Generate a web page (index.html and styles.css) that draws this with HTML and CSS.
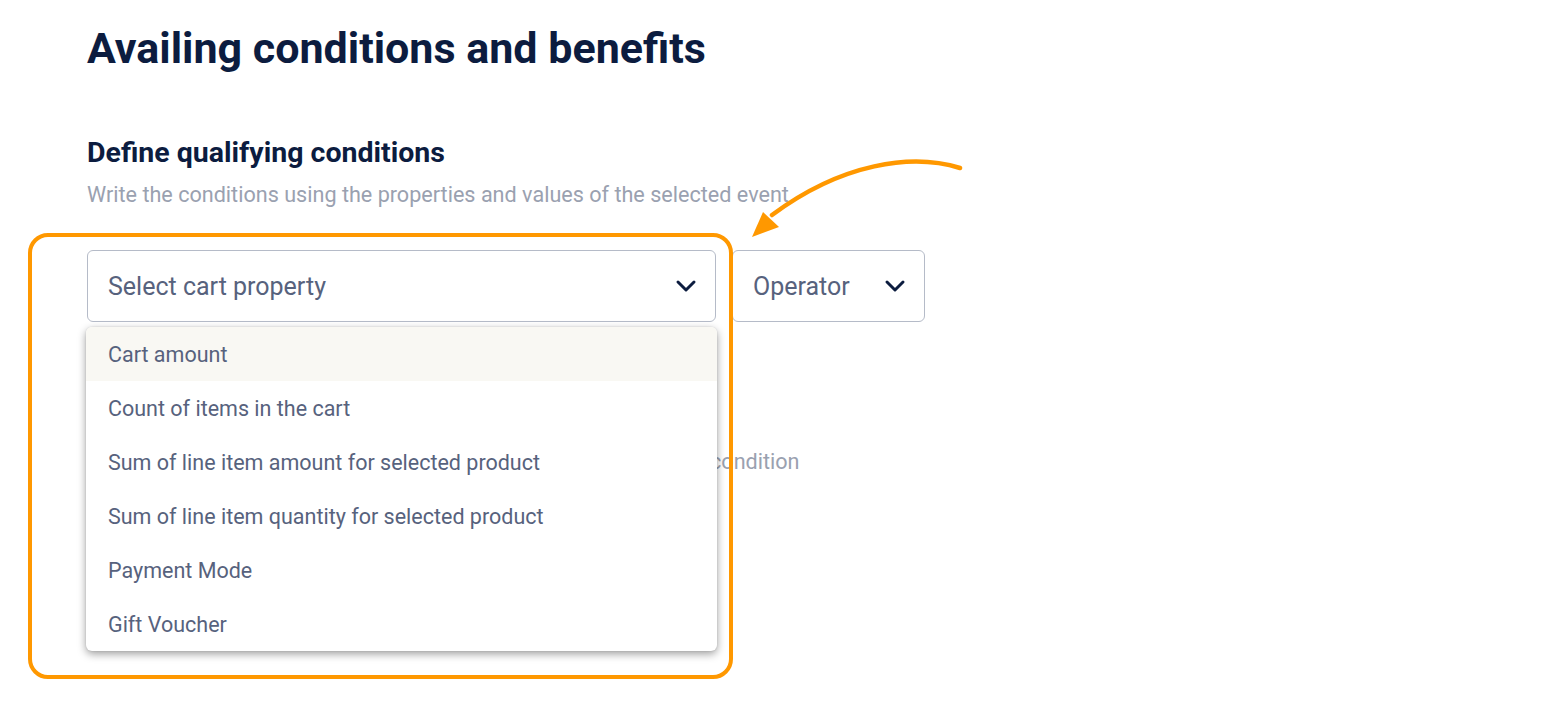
FILE: index.html
```html
<!DOCTYPE html>
<html>
<head>
<meta charset="utf-8">
<link rel="stylesheet" href="styles.css">
</head>
<body>
<div class="page">
  <h1 class="title">Availing conditions and benefits</h1>
  <section class="section">
    <h2 class="subtitle">Define qualifying conditions</h2>
    <p class="desc">Write the conditions using the properties and values of the selected event</p>
    <div class="row">
      <div class="select-wrap">
        <div class="select select-prop">
          <span class="placeholder">Select cart property</span>
          <svg class="chev" width="22" height="14" viewBox="0 0 22 14"><path d="M3 3 L11 11 L19 3" fill="none" stroke="#0c1c3f" stroke-width="3" stroke-linecap="round" stroke-linejoin="round"/></svg>
        </div>
        <ul class="menu">
          <li class="item active">Cart amount</li>
          <li class="item">Count of items in the cart</li>
          <li class="item">Sum of line item amount for selected product</li>
          <li class="item">Sum of line item quantity for selected product</li>
          <li class="item">Payment Mode</li>
          <li class="item">Gift Voucher</li>
        </ul>
        <div class="highlight"></div>
      </div>
      <div class="select select-op">
        <span class="placeholder">Operator</span>
        <svg class="chev" width="22" height="14" viewBox="0 0 22 14"><path d="M3 3 L11 11 L19 3" fill="none" stroke="#0c1c3f" stroke-width="3" stroke-linecap="round" stroke-linejoin="round"/></svg>
      </div>
    </div>
  </section>
  <section class="section2">
    <p class="desc">Add benefits the customer gets when a cart meets the qualifying condition</p>
  </section>
  <svg class="arrow" width="240" height="100" viewBox="0 0 240 100">
    <path d="M228 13 C180 -2 110 8 40 60" fill="none" stroke="#ff9800" stroke-width="4.5" stroke-linecap="round"/>
    <path d="M20 82 L31 57 L47 72 Z" fill="#ff9800"/>
  </svg>
</div>
</body>
</html>
```
FILE: styles.css
```css
* { box-sizing: border-box; }
html, body { margin: 0; padding: 0; background: #ffffff; }
body { font-family: Roboto, "Noto Sans", Arial, sans-serif; }
.page {
  position: relative;
  width: 1546px;
  height: 712px;
  padding: 22px 0 0 87px;
  overflow: hidden;
}
.title {
  margin: 0;
  font-size: 43px;
  line-height: 52px;
  font-weight: 700;
  color: #0c1c3f;
}
.section { margin-top: 62px; }
.subtitle {
  margin: 0;
  font-size: 28.5px;
  line-height: 34px;
  font-weight: 700;
  color: #0c1c3f;
}
.desc {
  margin: 11px 0 0;
  font-size: 21.6px;
  line-height: 28px;
  color: #9aa1b0;
}
.row {
  display: flex;
  gap: 16px;
  margin-top: 41px;
}
.select-wrap { position: relative; }
.select {
  height: 72px;
  border: 1px solid #b5bbc8;
  border-radius: 6px;
  display: flex;
  align-items: center;
  justify-content: space-between;
  padding: 0 18px 0 20px;
  background: #fff;
}
.select-prop { width: 629px; }
.select-op { width: 193px; }
.placeholder {
  font-size: 25px;
  color: #57627d;
}
.chev { display: block; }
.menu {
  position: absolute;
  top: 77px;
  left: -1px;
  width: 631px;
  margin: 0;
  padding: 0;
  list-style: none;
  background: #fff;
  border-radius: 6px;
  box-shadow: 0 3px 8px rgba(0,0,0,0.38), 0 0 2px rgba(0,0,0,0.12);
  overflow: hidden;
  z-index: 2;
}
.item {
  height: 54px;
  display: flex;
  align-items: center;
  padding-left: 22px;
  font-size: 21.5px;
  color: #57627d;
}
.item.active { background: #f9f8f3; }
.highlight {
  position: absolute;
  left: -59px;
  top: -17px;
  width: 705px;
  height: 446px;
  border: 4px solid #ff9800;
  border-radius: 20px;
  z-index: 3;
  pointer-events: none;
}
.section2 { margin-top: 126px; }
.arrow {
  position: absolute;
  left: 732px;
  top: 155px;
}
```
